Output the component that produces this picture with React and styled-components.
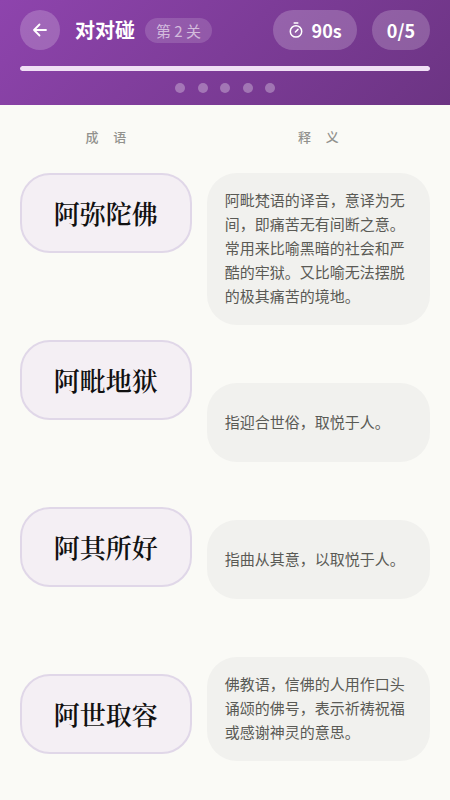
import React, { useState } from 'react'
import styled, { createGlobalStyle } from 'styled-components';

const GlobalStyle=createGlobalStyle`
*{
  box-sizing: border-box;
}
body{
  margin: 0;
  background-color: #fafaf6;
  font-family: "Noto Sans CJK SC", sans-serif;
}
`;

const Header=styled.header`
padding: 10px 20px 12px;
background: linear-gradient(135deg, #8e44ad, #6c3483);
color: white;
`;

const TopBar=styled.div`
display: flex;
align-items: center;
gap: 15px;
`;

const BackButton=styled.button`
display: flex;
align-items: center;
justify-content: center;
width: 40px;
height: 40px;
padding: 0;
border: none;
border-radius: 50%;
background-color: rgba(255, 255, 255, 0.2);
color: white;
cursor: pointer;
`;

const Heading=styled.div`
display: flex;
align-items: center;
flex: 1;
gap: 10px;
white-space: nowrap;
`;

const Title=styled.h1`
margin: 0;
font-size: 20px;
line-height: 28px;
font-weight: 700;
`;

const Level=styled.span`
padding: 0 11px;
border-radius: 13px;
background-color: rgba(255, 255, 255, 0.15);
color: rgba(255, 255, 255, 0.6);
font-size: 15px;
line-height: 25px;
`;

const Pill=styled.div`
display: flex;
align-items: center;
gap: 8px;
padding: 0 15px;
border-radius: 20px;
background-color: rgba(255, 255, 255, 0.2);
font-size: 18px;
line-height: 40px;
font-weight: 700;
`;

const Track=styled.div`
height: 5px;
margin-top: 16px;
border-radius: 3px;
overflow: hidden;
background-color: rgba(255, 255, 255, 0.2);
`;

const Fill=styled.div`
height: 100%;
border-radius: 3px;
background-color: #f0dff5;
`;

const Dots=styled.div`
display: flex;
justify-content: space-between;
width: 100px;
margin: 12px auto 0;
`;

const Dot=styled.span`
width: 10px;
height: 10px;
border-radius: 50%;
background-color: ${({$done})=>$done?"white":"rgba(255, 255, 255, 0.3)"};
`;

const Board=styled.main`
display: grid;
grid-template-columns: 1fr 1.3fr;
gap: 15px;
padding: 22px 20px 38px;
`;

const Column=styled.section`
display: flex;
flex-direction: column;
`;

const ColumnTitle=styled.h2`
margin: 0 0 26px;
padding-left: 6px;
color: #92928e;
font-size: 13px;
line-height: 20px;
font-weight: 500;
letter-spacing: 6px;
text-align: center;
`;

const List=styled.div`
display: flex;
flex-direction: column;
gap: ${({$gap})=>$gap};
`;

const Card=styled.button`
border: none;
border-radius: 30px;
font-family: inherit;
cursor: pointer;
`;

const Idiom=styled(Card)`
padding: 19px 0;
border: 2px solid ${({$active})=>$active?"#8e44ad":"#e0d7e8"};
background-color: #f4eff4;
color: #111111;
font-family: "Noto Serif CJK SC", "Noto Sans CJK SC", serif;
font-size: 26px;
line-height: 38px;
font-weight: 600;
`;

const Meaning=styled(Card)`
min-height: 79px;
padding: 15px 18px 17px;
background-color: #f1f1ee;
color: #5a5a55;
font-size: 15px;
line-height: 24px;
text-align: left;
`;

const idioms=["阿弥陀佛", "阿毗地狱", "阿其所好", "阿世取容"];

const meanings=[
  "阿毗梵语的译音，意译为无间，即痛苦无有间断之意。常用来比喻黑暗的社会和严酷的牢狱。又比喻无法摆脱的极其痛苦的境地。",
  "指迎合世俗，取悦于人。",
  "指曲从其意，以取悦于人。",
  "佛教语，信佛的人用作口头诵颂的佛号，表示祈祷祝福或感谢神灵的意思。",
];

const total=5;
const limit=90;

const ArrowIcon = () => (
  <svg width="16" height="16" viewBox="0 0 16 16" fill="none" stroke="currentColor" strokeWidth="1.8" strokeLinecap="round" strokeLinejoin="round">
    <path d="M14 8H2M7.5 2.5L2 8l5.5 5.5"/>
  </svg>
)

const TimerIcon = () => (
  <svg width="16" height="18" viewBox="0 0 16 18" fill="none" stroke="currentColor" strokeWidth="1.5" strokeLinecap="round">
    <path d="M6.2 2h3.6"/>
    <circle cx="8" cy="10.4" r="5.7"/>
    <path d="M7.4 11l2.6-2.6"/>
  </svg>
)

const App = () => {
  const [selected,setSelected]=useState(null);
  const [found]=useState(0);
  const [seconds]=useState(limit);

  return (
    <div lang="zh-CN">
      <GlobalStyle/>
      <Header>
        <TopBar>
          <BackButton type="button" aria-label="返回"><ArrowIcon/></BackButton>
          <Heading>
            <Title>对对碰</Title>
            <Level>第 2 关</Level>
          </Heading>
          <Pill><TimerIcon/>{seconds}s</Pill>
          <Pill>{found}/{total}</Pill>
        </TopBar>
        <Track>
          <Fill style={{width:`${seconds/limit*100}%`}}/>
        </Track>
        <Dots>
          {Array.from({length:total},(_,i)=>(
            <Dot key={i} $done={i<found}/>
          ))}
        </Dots>
      </Header>
      <Board>
        <Column>
          <ColumnTitle>成 语</ColumnTitle>
          <List $gap="87px">
            {idioms.map((text)=>(
              <Idiom key={text} type="button" $active={selected===text} onClick={()=>setSelected(text)}>{text}</Idiom>
            ))}
          </List>
        </Column>
        <Column>
          <ColumnTitle>释 义</ColumnTitle>
          <List $gap="58px">
            {meanings.map((text)=>(
              <Meaning key={text} type="button">{text}</Meaning>
            ))}
          </List>
        </Column>
      </Board>
    </div>
  )
}

export default App
